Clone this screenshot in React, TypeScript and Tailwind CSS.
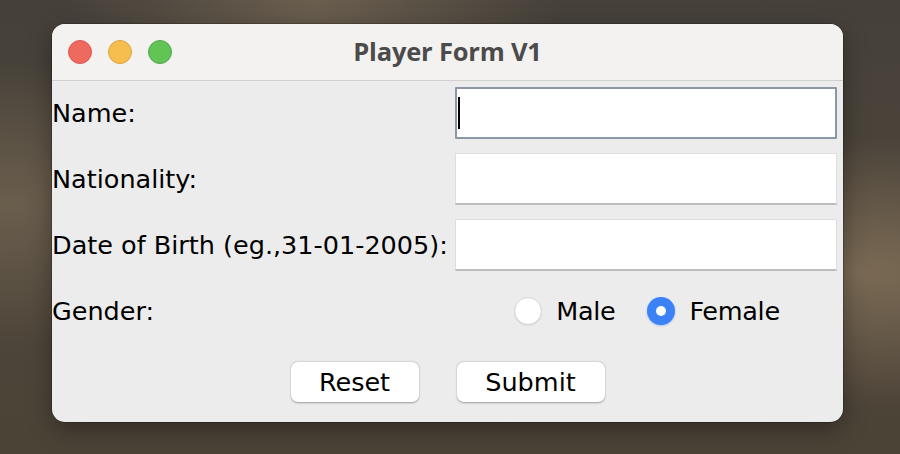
import React from "react";

const labelFont = "font-['DejaVu_Sans','Lucida_Grande',sans-serif]";

function Field({ focused = false }: { focused?: boolean }) {
  if (focused) {
    return (
      <div className="h-[52px] bg-white border-2 border-[#8b97a7] rounded-[1px] flex items-center pl-[1px]">
        <span className="w-[2px] h-[32px] bg-black" />
      </div>
    );
  }
  return (
    <div className="h-[52px] bg-white border border-[#dedede] border-b-[#bdbdbd] border-b-2" />
  );
}

function Radio({ checked, label }: { checked?: boolean; label: string }) {
  return (
    <label className="flex items-center gap-[14px]">
      {checked ? (
        <span className="w-[28px] h-[28px] rounded-full bg-[#3b82f7] flex items-center justify-center shadow-[0_1px_2px_rgba(59,130,247,0.4)]">
          <span className="w-[10px] h-[10px] rounded-full bg-white" />
        </span>
      ) : (
        <span className="w-[28px] h-[28px] rounded-full bg-white border border-[#d4d4d4] shadow-[0_1px_1px_rgba(0,0,0,0.08)]" />
      )}
      <span className="text-[25.5px] tracking-[-0.3px] text-black">{label}</span>
    </label>
  );
}

function Button({ children, width }: { children: React.ReactNode; width: string }) {
  return (
    <button
      className={`${width} h-[40px] bg-white rounded-[7px] text-[25.5px] text-black shadow-[0_0.5px_2px_rgba(0,0,0,0.35)] flex items-center justify-center`}
    >
      {children}
    </button>
  );
}

export default function App() {
  return (
    <div className="w-[900px] h-[454px] overflow-hidden pt-[24px] pl-[52px] bg-[#4a4238] bg-[radial-gradient(ellipse_at_95%_60%,#7a6a54_0%,transparent_35%),radial-gradient(ellipse_at_0%_45%,#6a5e4d_0%,transparent_40%),radial-gradient(ellipse_at_35%_0%,#6a5e4e_0%,transparent_30%),linear-gradient(180deg,#45403a_0%,#4e463b_55%,#4c4337_100%)]">
      <div className="w-[791px] h-[398px] rounded-[13px] overflow-hidden bg-[#ececec] flex flex-col shadow-[0_0_0_0.5px_rgba(0,0,0,0.4),0_8px_24px_rgba(0,0,0,0.35)]">
        <div className="h-[57px] shrink-0 bg-[#f3f2f1] border-b border-[#d0d0d0] grid grid-cols-[1fr_auto_1fr] items-center">
          <div className="flex items-center gap-[16px] pl-[16px]">
            <span className="w-[24px] h-[24px] rounded-full bg-[#ee6a5f] border border-[#d55a50]" />
            <span className="w-[24px] h-[24px] rounded-full bg-[#f5be4f] border border-[#dca33f]" />
            <span className="w-[24px] h-[24px] rounded-full bg-[#61c455] border border-[#4fa945]" />
          </div>
          <div className="font-['Open_Sans',sans-serif] font-bold text-[25.5px] tracking-[-0.2px] text-[#4b4b4b] pb-[1px]">
            Player Form V1
          </div>
          <div />
        </div>

        <div className={`${labelFont} pt-[6px] pr-[6px] grid grid-cols-[403px_1fr] auto-rows-[52px] gap-y-[14px] text-[25.5px] text-black`}>
          <div className="flex items-center">Name:</div>
          <Field focused />
          <div className="flex items-center">Nationality:</div>
          <Field />
          <div className="flex items-center">Date of Birth (eg.,31-01-2005):</div>
          <Field />
          <div className="flex items-center">Gender:</div>
          <div className="flex items-center justify-center gap-[32px] pl-[2px]">
            <Radio label="Male" />
            <Radio label="Female" checked />
          </div>
        </div>

        <div className={`${labelFont} flex justify-center gap-[38px] mt-[25px]`}>
          <Button width="w-[128px]">Reset</Button>
          <Button width="w-[148px]">Submit</Button>
        </div>
      </div>
    </div>
  );
}
